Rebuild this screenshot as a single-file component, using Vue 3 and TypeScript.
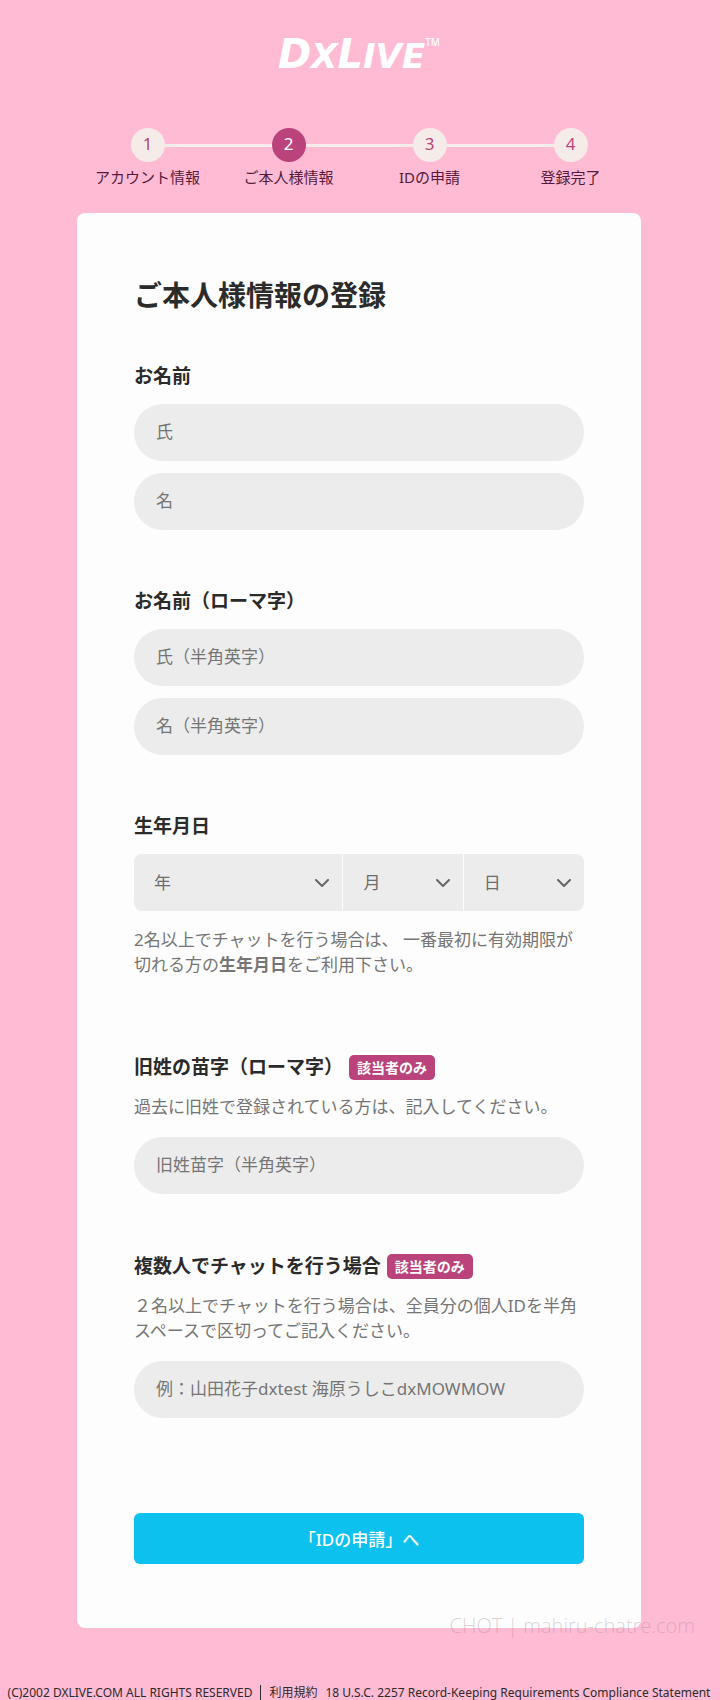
<script setup lang="ts">
import { reactive } from 'vue'

interface Field {
  id: string
  placeholder: string
}

const steps: string[] = ['アカウント情報', 'ご本人様情報', 'IDの申請', '登録完了']
const currentStep = 2

const nameFields: Field[] = [
  { id: 'lastName', placeholder: '氏' },
  { id: 'firstName', placeholder: '名' },
]
const romanFields: Field[] = [
  { id: 'lastRoman', placeholder: '氏（半角英字）' },
  { id: 'firstRoman', placeholder: '名（半角英字）' },
]

const range = (from: number, to: number): number[] =>
  Array.from({ length: to - from + 1 }, (_, i) => from + i)

const birthParts = [
  { id: 'year', label: '年', options: range(1950, 2005) },
  { id: 'month', label: '月', options: range(1, 12) },
  { id: 'day', label: '日', options: range(1, 31) },
]

const form = reactive<Record<string, string>>({
  lastName: '',
  firstName: '',
  lastRoman: '',
  firstRoman: '',
  year: '',
  month: '',
  day: '',
  maidenName: '',
  members: '',
})
</script>

<template>
  <div class="page">
    <header class="logo" aria-label="DXLIVE">
      <span class="big">D</span><span class="small">X</span><span class="big">L</span><span class="small">IVE</span><span class="tm">TM</span>
    </header>

    <ol class="steps">
      <li v-for="(step, i) in steps" :key="step" :class="{ current: i + 1 === currentStep }">
        <span class="circle">{{ i + 1 }}</span>
        <span class="step-label">{{ step }}</span>
      </li>
    </ol>

    <main class="card">
      <h1>ご本人様情報の登録</h1>
      <form @submit.prevent>
        <fieldset>
          <legend>お名前</legend>
          <div class="stack">
            <input v-for="f in nameFields" :id="f.id" :key="f.id" v-model="form[f.id]" type="text" :placeholder="f.placeholder" :aria-label="f.placeholder">
          </div>
        </fieldset>

        <fieldset>
          <legend>お名前（ローマ字）</legend>
          <div class="stack">
            <input v-for="f in romanFields" :id="f.id" :key="f.id" v-model="form[f.id]" type="text" :placeholder="f.placeholder" :aria-label="f.placeholder">
          </div>
        </fieldset>

        <fieldset class="birth-group">
          <legend>生年月日</legend>
          <div class="birth">
            <div v-for="p in birthParts" :key="p.id" class="select">
              <select :id="p.id" v-model="form[p.id]" :aria-label="p.label">
                <option value="">{{ p.label }}</option>
                <option v-for="o in p.options" :key="o" :value="String(o)">{{ o }}</option>
              </select>
              <svg viewBox="0 0 14 9" width="14" height="9" aria-hidden="true"><path d="M1 1l6 6 6-6" /></svg>
            </div>
          </div>
          <p class="note">2名以上でチャットを行う場合は、 一番最初に有効期限が切れる方の<b>生年月日</b>をご利用下さい。</p>
        </fieldset>

        <div class="group">
          <div class="title"><label for="maiden">旧姓の苗字（ローマ字）</label><span class="badge">該当者のみ</span></div>
          <p class="note">過去に旧姓で登録されている方は、記入してください。</p>
          <input id="maiden" v-model="form.maidenName" type="text" placeholder="旧姓苗字（半角英字）">
        </div>

        <div class="group">
          <div class="title"><label for="members">複数人でチャットを行う場合</label><span class="badge">該当者のみ</span></div>
          <p class="note">２名以上でチャットを行う場合は、全員分の個人IDを半角スペースで区切ってご記入ください。</p>
          <input id="members" v-model="form.members" type="text" placeholder="例：山田花子dxtest 海原うしこdxMOWMOW">
        </div>

        <button type="submit">「IDの申請」へ</button>
      </form>
      <span class="watermark">CHOT | mahiru-chatre.com</span>
    </main>

    <footer>
      <span>(C)2002 DXLIVE.COM ALL RIGHTS RESERVED</span>
      <a class="terms" href="#">利用規約</a>
      <a href="#">18 U.S.C. 2257 Record-Keeping Requirements Compliance Statement</a>
    </footer>
  </div>
</template>

<style>
body {
  margin: 0;
  background: #ffbbd4;
}
</style>

<style scoped>
* {
  box-sizing: border-box;
}
.page {
  min-height: 100vh;
  padding-right: 2px;
  overflow: hidden;
  font-family: "Noto Sans", "Noto Sans CJK JP", sans-serif;
  color: #2b2b2b;
}
.logo {
  display: flex;
  justify-content: center;
  align-items: baseline;
  height: 44px;
  margin-top: 32px;
  line-height: 44px;
  color: #fff;
  font-family: "DejaVu Sans", sans-serif;
  font-style: italic;
  font-weight: 700;
}
.big {
  font-size: 40px;
}
.small {
  font-size: 34px;
}
.tm {
  align-self: flex-start;
  font-family: "Noto Sans", sans-serif;
  font-size: 10px;
  font-style: normal;
  font-weight: 500;
  line-height: 20px;
}
.steps {
  display: grid;
  grid-template-columns: repeat(4, 1fr);
  max-width: 564px;
  margin: 52px auto 0;
  padding: 0;
  list-style: none;
}
.steps li {
  position: relative;
  display: flex;
  flex-direction: column;
  align-items: center;
}
.steps li + li::before {
  content: "";
  position: absolute;
  top: 16px;
  right: 50%;
  z-index: -1;
  width: 100%;
  height: 3px;
  background: #f5ece9;
}
.circle {
  width: 34px;
  height: 34px;
  border-radius: 50%;
  background: #f5ece9;
  color: #bb437b;
  font-size: 17px;
  line-height: 32px;
  text-align: center;
}
.current .circle {
  background: #bb437b;
  color: #fff;
}
.step-label {
  margin-top: 3px;
  font-size: 15px;
  line-height: 24px;
  color: #561b3c;
  white-space: nowrap;
}
.card {
  position: relative;
  max-width: 564px;
  margin: 24px auto 0;
  padding: 64px 57px;
  border-radius: 8px;
  background: #fdfdfd;
}
h1 {
  margin: 0 0 49px;
  font-size: 28px;
  line-height: 36px;
  font-weight: 700;
}
fieldset {
  min-width: 0;
  margin: 0 0 57px;
  padding: 0;
  border: 0;
}
legend,
.title {
  padding: 0;
  font-size: 19px;
  line-height: 28px;
  font-weight: 700;
}
.stack {
  display: grid;
  gap: 12px;
  margin-top: 14px;
}
input {
  display: block;
  width: 100%;
  height: 57px;
  padding: 0 22px 2px;
  border: 0;
  border-radius: 29px;
  background: #ececec;
  color: #444;
  font: inherit;
  font-size: 17px;
}
input::placeholder {
  color: #757575;
  opacity: 1;
}
.birth {
  display: grid;
  grid-template-columns: 208fr 119fr 120fr;
  gap: 1px;
  margin: 14px 0 16px;
  overflow: hidden;
  border-radius: 8px;
}
.select {
  position: relative;
}
select {
  display: block;
  width: 100%;
  height: 57px;
  padding: 0 20px;
  border: 0;
  border-radius: 0;
  background: #ececec;
  color: #6d6d6d;
  font: inherit;
  font-size: 17px;
  appearance: none;
}
.select svg {
  position: absolute;
  top: 25px;
  right: 13px;
  fill: none;
  stroke: #666;
  stroke-width: 2;
  stroke-linecap: round;
  stroke-linejoin: round;
  pointer-events: none;
}
.note {
  margin: 0;
  color: #757575;
  font-size: 17px;
  line-height: 25px;
}
.birth-group {
  margin-bottom: 76px;
}
.title {
  display: flex;
  align-items: center;
  gap: 6px;
}
.badge {
  padding: 0 8px;
  border-radius: 5px;
  background: #bb437b;
  color: #fff;
  font-size: 14px;
  line-height: 25px;
}
.group {
  margin-bottom: 58px;
}
.group .note {
  margin: 13px 0 18px;
}
button {
  display: block;
  width: 100%;
  height: 51px;
  margin: 95px 0 0;
  padding: 0;
  border: 0;
  border-radius: 6px;
  background: #0dc1ee;
  color: #fff;
  font: inherit;
  font-size: 17px;
  font-weight: 500;
}
.watermark {
  position: absolute;
  right: -54px;
  bottom: -12px;
  color: rgba(150, 130, 140, 0.35);
  font-family: "Open Sans", sans-serif;
  font-size: 20px;
  line-height: 28px;
  font-weight: 300;
  white-space: nowrap;
}
footer {
  display: flex;
  justify-content: center;
  margin-top: 57px;
  font-size: 12px;
  line-height: 15px;
  white-space: nowrap;
}
footer a {
  color: inherit;
  text-decoration: none;
}
.terms {
  margin: 0 8px;
  padding-left: 8px;
  border-left: 1px solid #2b2b2b;
}
</style>
